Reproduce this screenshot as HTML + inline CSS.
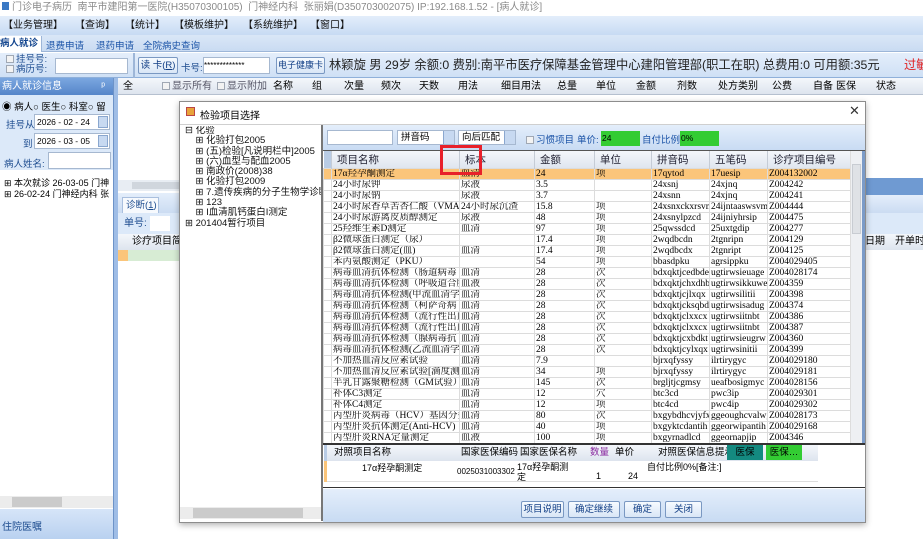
<!DOCTYPE html>
<html><head><meta charset="utf-8">
<style>
*{margin:0;padding:0;box-sizing:border-box}
body{width:923px;height:539px;overflow:hidden;position:relative;background:#fff;font-family:"Liberation Sans","Noto Sans CJK SC",sans-serif;font-size:10px;color:#000}
.a{position:absolute;white-space:nowrap}
.blue{background:linear-gradient(#e3eefb,#c7dbf3)}
table{border-collapse:collapse;table-layout:fixed}
td{border:1px solid #dcdcdc;height:11px;line-height:10px;font-size:9.5px;padding:0 1px;overflow:hidden;white-space:nowrap;font-family:"Liberation Serif","Noto Serif CJK SC",serif}
tr.sel td{background:#fbc57a}
th{font-weight:normal;text-align:left;padding-left:5px;font-size:10.5px;background:linear-gradient(#f4f7fb,#dfe6ef);border-right:1px solid #c5ccd6;height:17px;color:#223;white-space:nowrap;overflow:hidden}
.btn{position:absolute;border:1px solid #7a98c2;background:linear-gradient(#f7fbff,#d9e6f6);color:#123f86;text-align:center;border-radius:2px;font-size:9.5px;line-height:15px;white-space:nowrap;overflow:hidden}
.cb{display:inline-block;width:8px;height:8px;border:1px solid #a0a8b4;background:#f3f3f3;vertical-align:-1px;margin-right:2px}
</style></head><body>

<div class="a" style="left:0;top:0;width:923px;height:16px;background:#fff;color:#8a8a8a;font-size:10px;line-height:16px;padding-left:2px"><span style="display:inline-block;width:7px;height:8px;background:#3b79c4;margin-right:3px"></span>门诊电子病历 &nbsp;南平市建阳第一医院(H35070300105) &nbsp;门神经内科 &nbsp;张丽娟(D350703002075) IP:192.168.1.52 - [病人就诊]</div>
<div class="a blue" style="left:0;top:16px;width:923px;height:19px;font-size:10px;line-height:19px;color:#111">
<span class="a" style="left:3px">【业务管理】</span><span class="a" style="left:75px">【查询】</span><span class="a" style="left:125px">【统计】</span><span class="a" style="left:174px">【模板维护】</span><span class="a" style="left:243px">【系统维护】</span><span class="a" style="left:310px">【窗口】</span></div>
<div class="a" style="left:0;top:35px;width:923px;height:17px;background:linear-gradient(#dae7f7,#c9dbf2);border-bottom:1px solid #9db6d8"></div>
<div class="a" style="left:0;top:36px;width:42px;height:16px;background:#fff;font-weight:bold;color:#14468f;font-size:9.5px;line-height:16px;border-right:1px solid #9db6d8;overflow:hidden">病人就诊</div>
<div class="a" style="left:46px;top:38px;color:#1d55a8;font-size:9.5px">退费申请</div>
<div class="a" style="left:96px;top:38px;color:#1d55a8;font-size:9.5px">退药申请</div>
<div class="a" style="left:143px;top:38px;color:#1d55a8;font-size:9.5px">全院病史查询</div>
<div class="a" style="left:0;top:53px;width:923px;height:25px;background:linear-gradient(#e4eefb,#cfe0f5);border-bottom:1px solid #8fb0da"></div>
<div class="a" style="left:6px;top:55px;font-size:9.5px;line-height:10px;color:#1d4c8f"><span class="cb"></span>挂号号:<br><span class="cb"></span>病历号:</div>
<div class="a" style="left:55px;top:58px;width:73px;height:16px;background:#fff;border:1px solid #a6b8d0"></div>
<div class="a" style="left:133px;top:53px;width:2px;height:25px;background:#9db6d8"></div>
<div class="btn" style="left:138px;top:57px;width:40px;height:17px">读 卡(<u>R</u>)</div>
<div class="a" style="left:181px;top:60px;color:#1d4c8f;font-size:9.5px">卡号:</div>
<div class="a" style="left:203px;top:57px;width:67px;height:17px;background:#fff;border:1px solid #a6b8d0;font-size:8px;line-height:15px;overflow:hidden">*************</div>
<div class="btn" style="left:276px;top:57px;width:49px;height:17px;font-size:9px">电子健康卡</div>
<div class="a" style="left:329px;top:57px;font-size:12.3px;line-height:16px;color:#222">林颖旋 男 29岁 余额:0 费别:南平市医疗保障基金管理中心建阳管理部(职工在职) 总费用:0 可用额:35元</div>
<div class="a" style="left:904px;top:57px;font-size:12.3px;line-height:16px;color:#e02020">过敏</div>
<!-- left panel -->
<div class="a" style="left:0;top:78px;width:113px;height:17px;background:linear-gradient(#7ba7e0,#5585c9);color:#fff;font-size:10px;line-height:17px;padding-left:2px">病人就诊信息<span style="position:absolute;right:8px">ᵖ</span></div>
<div class="a" style="left:0;top:95px;width:113px;height:75px;background:#dce9f9"></div>
<div class="a" style="left:2px;top:99px;font-size:9.5px">◉ 病人○ 医生○ 科室○ 留</div>
<div class="a" style="left:6px;top:117px;font-size:9.5px;color:#1d4c8f">挂号从</div>
<div class="a" style="left:34px;top:114px;width:76px;height:16px;background:#fff;border:1px solid #a6b8d0;font-size:8.5px;line-height:14px;padding-left:2px">2026 - 02 - 24<span style="position:absolute;right:1px;top:1px;width:10px;height:12px;background:#c7d9f1;border:1px solid #8aa7cf"></span></div>
<div class="a" style="left:23px;top:136px;font-size:9.5px;color:#1d4c8f">到</div>
<div class="a" style="left:34px;top:133px;width:76px;height:16px;background:#fff;border:1px solid #a6b8d0;font-size:8.5px;line-height:14px;padding-left:2px">2026 - 03 - 05<span style="position:absolute;right:1px;top:1px;width:10px;height:12px;background:#c7d9f1;border:1px solid #8aa7cf"></span></div>
<div class="a" style="left:4px;top:156px;font-size:9.5px;color:#1d4c8f">病人姓名:</div>
<div class="a" style="left:48px;top:152px;width:63px;height:17px;background:#fff;border:1px solid #a6b8d0"></div>
<div class="a" style="left:4px;top:178px;width:109px;overflow:hidden;font-size:9px;line-height:11px">⊞ 本次就诊 26-03-05 门神<br>⊞ 26-02-24 门神经内科 张</div>
<div class="a" style="left:0;top:496px;width:113px;height:12px;background:#ececec"><div style="position:absolute;left:12px;top:1px;width:50px;height:10px;background:#cbcbcb"></div></div>
<div class="a" style="left:0;top:509px;width:113px;height:30px;background:linear-gradient(#d6e5f8,#b9d1f0);color:#1d4c8f;font-size:10px;line-height:38px;padding-left:2px">住院医嘱</div>
<div class="a" style="left:113px;top:78px;width:5px;height:461px;background:#9fbde6;border-left:1px solid #6d93c8"></div>
<!-- main grid header -->
<div class="a" style="left:118px;top:78px;width:805px;height:17px;background:linear-gradient(#f4f7fb,#dde4ee);border-bottom:1px solid #b5c0cf;font-size:10px;line-height:17px">
<span class="a" style="left:5px">全</span><span class="a" style="left:44px;color:#556"><span class="cb"></span>显示所有</span><span class="a" style="left:99px;color:#556"><span class="cb"></span>显示附加</span><span class="a" style="left:155px">名称</span><span class="a" style="left:194px">组</span><span class="a" style="left:226px">次量</span><span class="a" style="left:263px">频次</span><span class="a" style="left:301px">天数</span><span class="a" style="left:340px">用法</span><span class="a" style="left:383px">细目用法</span><span class="a" style="left:439px">总量</span><span class="a" style="left:478px">单位</span><span class="a" style="left:518px">金额</span><span class="a" style="left:559px">剂数</span><span class="a" style="left:600px">处方类别</span><span class="a" style="left:654px">公费</span><span class="a" style="left:695px">自备</span><span class="a" style="left:718px">医保</span><span class="a" style="left:758px">状态</span></div>
<!-- behind dialog left -->
<div class="a" style="left:118px;top:180px;width:62px;height:11px;background:#e8edf3"><div style="position:absolute;left:14px;top:2px;width:48px;height:7px;background:#d0d6dd"></div></div>
<div class="a" style="left:118px;top:193px;width:62px;height:20px;background:linear-gradient(#e4eefb,#cbdcf2)"></div>
<div class="a" style="left:122px;top:197px;width:37px;height:16px;background:#f6f9fd;border:1px solid #a9bfde;border-bottom:none;color:#1d4c8f;font-size:9.5px;line-height:15px;padding-left:3px">诊断(<u>1</u>)</div>
<div class="a" style="left:118px;top:213px;width:62px;height:21px;background:#dce9f9;color:#1d4c8f;font-size:10px;line-height:21px;padding-left:6px">单号:<span style="display:inline-block;width:20px;height:15px;background:#fff;vertical-align:middle;margin-left:3px"></span></div>
<div class="a" style="left:118px;top:234px;width:62px;height:16px;background:linear-gradient(#f4f7fb,#dde4ee);font-size:10px;line-height:16px;padding-left:14px;overflow:hidden">诊疗项目简</div>
<div class="a" style="left:118px;top:250px;width:62px;height:11px;background:#d7ecd4"><div style="width:10px;height:11px;background:#fbc57a"></div></div>
<!-- behind dialog right -->
<div class="a" style="left:865px;top:178px;width:58px;height:17px;background:#6f9ad2"></div>
<div class="a" style="left:865px;top:195px;width:58px;height:18px;background:linear-gradient(#e4eefb,#cbdcf2)"></div>
<div class="a" style="left:865px;top:213px;width:58px;height:21px;background:#dce9f9"></div>
<div class="a" style="left:865px;top:234px;width:58px;height:16px;background:linear-gradient(#f4f7fb,#dde4ee);font-size:10px;line-height:16px"><span style="position:absolute;left:0">日期</span><span style="position:absolute;left:30px">开单时</span></div>

<!-- dialog -->
<div class="a" style="left:179px;top:101px;width:687px;height:422px;background:#fff;border:1px solid #8d8d8d;box-shadow:0 2px 6px rgba(0,0,0,.3)"></div>
<div class="a" style="left:186px;top:107px;width:9px;height:9px;background:#e8a33a;border:1px solid #b44"></div>
<div class="a" style="left:200px;top:107px;font-size:10px">检验项目选择</div>
<div class="a" style="left:849px;top:103px;font-size:13px;color:#333">✕</div>
<div class="a" style="left:180px;top:124px;width:685px;height:1px;background:#cfcfcf"></div>
<!-- tree -->
<div class="a" style="left:185px;top:126px;width:136px;overflow:hidden;font-size:9.5px;line-height:10.3px;color:#111">⊟ 化验<br>&nbsp;&nbsp;&nbsp;&nbsp;⊞ 化验打包2005<br>&nbsp;&nbsp;&nbsp;&nbsp;⊞ (五)检验[凡说明栏中]2005<br>&nbsp;&nbsp;&nbsp;&nbsp;⊞ (六)血型与配血2005<br>&nbsp;&nbsp;&nbsp;&nbsp;⊞ 南政价(2008)38<br>&nbsp;&nbsp;&nbsp;&nbsp;⊞ 化验打包2009<br>&nbsp;&nbsp;&nbsp;&nbsp;⊞ 7.遗传疾病的分子生物学诊断<br>&nbsp;&nbsp;&nbsp;&nbsp;⊞ 123<br>&nbsp;&nbsp;&nbsp;&nbsp;⊞ I血清肌钙蛋白I测定<br>⊞ 201404暂行项目</div>
<div class="a" style="left:180px;top:507px;width:141px;height:12px;background:#ececec"><div style="position:absolute;left:13px;top:1px;width:110px;height:10px;background:#cbcbcb"></div></div>
<div class="a" style="left:321px;top:125px;width:2px;height:396px;background:#777"></div>
<!-- right toolbar -->
<div class="a" style="left:323px;top:125px;width:542px;height:25px;background:linear-gradient(#e4eefb,#c8dbf3)"></div>
<div class="a" style="left:327px;top:130px;width:66px;height:15px;background:#fff;border:1px solid #a6b8d0"></div>
<div class="a" style="left:397px;top:130px;width:58px;height:15px;background:#fff;border:1px solid #a6b8d0;font-size:9.5px;line-height:13px;padding-left:3px">拼音码<span style="position:absolute;right:0;top:0;width:11px;height:13px;background:#c7d9f1;border-left:1px solid #8aa7cf"></span></div>
<div class="a" style="left:458px;top:130px;width:58px;height:15px;background:#fff;border:1px solid #a6b8d0;font-size:9.5px;line-height:13px;padding-left:3px">向后匹配<span style="position:absolute;right:0;top:0;width:11px;height:13px;background:#c7d9f1;border-left:1px solid #8aa7cf"></span></div>
<div class="a" style="left:526px;top:132px;font-size:9.5px;color:#1d55a8"><span class="cb"></span>习惯项目</div>
<div class="a" style="left:577px;top:132px;font-size:9.5px;color:#1d55a8">单价:</div>
<div class="a" style="left:601px;top:131px;width:39px;height:15px;background:#33cc33;font-size:8.5px;line-height:14px;padding-left:1px">24</div>
<div class="a" style="left:642px;top:132px;font-size:9.5px;color:#1d55a8">自付比例:</div>
<div class="a" style="left:680px;top:131px;width:39px;height:15px;background:#33cc33;font-size:8.5px;line-height:14px;padding-left:1px">0%</div>
<!-- main table -->
<div class="a" style="left:323px;top:150px;width:542px;height:293px;background:#fff;border-top:1px solid #555;overflow:hidden">
<table style="width:527px"><colgroup><col style="width:8px"><col style="width:128px"><col style="width:75px"><col style="width:60px"><col style="width:57px"><col style="width:58px"><col style="width:58px"><col style="width:83px"></colgroup>
<tr><th style="padding:0;background:#b9cce5"></th><th>项目名称</th><th>标本</th><th>金额</th><th>单位</th><th>拼音码</th><th>五笔码</th><th>诊疗项目编号</th></tr>
<tr class="sel"><td></td><td>17α羟孕酮测定</td><td>血清</td><td>24</td><td>项</td><td>17qytod</td><td>17uesip</td><td>Z004132002</td></tr>
<tr><td></td><td>24小时尿钾</td><td>尿液</td><td>3.5</td><td></td><td>24xsnj</td><td>24xjnq</td><td>Z004242</td></tr>
<tr><td></td><td>24小时尿钠</td><td>尿液</td><td>3.7</td><td></td><td>24xsnn</td><td>24xjnq</td><td>Z004241</td></tr>
<tr><td></td><td>24小时尿香草苦杏仁酸（VMA）测</td><td>24小时尿沉渣</td><td>15.8</td><td>项</td><td>24xsnxckxrsvm</td><td>24ijntaaswsvm</td><td>Z004444</td></tr>
<tr><td></td><td>24小时尿游离皮质醇测定</td><td>尿液</td><td>48</td><td>项</td><td>24xsnylpzcd</td><td>24ijniyhrsip</td><td>Z004475</td></tr>
<tr><td></td><td>25羟维生素D测定</td><td>血清</td><td>97</td><td>项</td><td>25qwssdcd</td><td>25uxtgdip</td><td>Z004277</td></tr>
<tr><td></td><td>β2微球蛋白测定（尿）</td><td></td><td>17.4</td><td>项</td><td>2wqdbcdn</td><td>2tgnripn</td><td>Z004129</td></tr>
<tr><td></td><td>β2微球蛋白测定(血)</td><td>血清</td><td>17.4</td><td>项</td><td>2wqdbcdx</td><td>2tgnript</td><td>Z004125</td></tr>
<tr><td></td><td>苯丙氨酸测定（PKU）</td><td></td><td>54</td><td>项</td><td>bbasdpku</td><td>agrsippku</td><td>Z004029405</td></tr>
<tr><td></td><td>病毒血清抗体检测（肠道病毒</td><td>血清</td><td>28</td><td>次</td><td>bdxqktjcedbde</td><td>ugtirwsieuage</td><td>Z004028174</td></tr>
<tr><td></td><td>病毒血清抗体检测（呼吸道合胞</td><td>血液</td><td>28</td><td>次</td><td>bdxqktjchxdhb</td><td>ugtirwsikkuwe</td><td>Z004359</td></tr>
<tr><td></td><td>病毒血清抗体检测(甲流血清学抗</td><td>血清</td><td>28</td><td>次</td><td>bdxqktjcjlxqx</td><td>ugtirwsilitii</td><td>Z004398</td></tr>
<tr><td></td><td>病毒血清抗体检测（柯萨奇病</td><td>血清</td><td>28</td><td>次</td><td>bdxqktjcksqbd</td><td>ugtirwsisadug</td><td>Z004374</td></tr>
<tr><td></td><td>病毒血清抗体检测（流行性出血</td><td>血清</td><td>28</td><td>次</td><td>bdxqktjclxxcx</td><td>ugtirwsiitnbt</td><td>Z004386</td></tr>
<tr><td></td><td>病毒血清抗体检测（流行性出血</td><td>血清</td><td>28</td><td>次</td><td>bdxqktjclxxcx</td><td>ugtirwsiitnbt</td><td>Z004387</td></tr>
<tr><td></td><td>病毒血清抗体检测（腺病毒抗</td><td>血清</td><td>28</td><td>次</td><td>bdxqktjcxbdkt</td><td>ugtirwsieugrw</td><td>Z004360</td></tr>
<tr><td></td><td>病毒血清抗体检测(乙流血清学抗</td><td>血清</td><td>28</td><td>次</td><td>bdxqktjcylxqx</td><td>ugtirwsinitii</td><td>Z004399</td></tr>
<tr><td></td><td>不加热血清反应素试验</td><td>血清</td><td>7.9</td><td></td><td>bjrxqfyssy</td><td>ilrtirygyc</td><td>Z004029180</td></tr>
<tr><td></td><td>不加热血清反应素试验[滴度测</td><td>血清</td><td>34</td><td>项</td><td>bjrxqfyssy</td><td>ilrtirygyc</td><td>Z004029181</td></tr>
<tr><td></td><td>半乳甘露聚糖检测（GM试验）</td><td>血清</td><td>145</td><td>次</td><td>brgljtjcgmsy</td><td>ueafbosigmyc</td><td>Z004028156</td></tr>
<tr><td></td><td>补体C3测定</td><td>血清</td><td>12</td><td>穴</td><td>btc3cd</td><td>pwc3ip</td><td>Z004029301</td></tr>
<tr><td></td><td>补体C4测定</td><td>血清</td><td>12</td><td>项</td><td>btc4cd</td><td>pwc4ip</td><td>Z004029302</td></tr>
<tr><td></td><td>丙型肝炎病毒（HCV）基因分型</td><td>血清</td><td>80</td><td>次</td><td>bxgybdhcvjyfx</td><td>ggeoughcvalwg</td><td>Z004028173</td></tr>
<tr><td></td><td>丙型肝炎抗体测定(Anti-HCV)</td><td>血清</td><td>40</td><td>项</td><td>bxgyktcdantih</td><td>ggeorwipantih</td><td>Z004029168</td></tr>
<tr><td></td><td>丙型肝炎RNA定量测定</td><td>血液</td><td>100</td><td>项</td><td>bxgyrnadlcd</td><td>ggeornapjip</td><td>Z004346</td></tr>
</table>
<div style="position:absolute;left:527px;top:0;width:12px;height:293px;background:#eef0f3;border-left:1px solid #ddd"><div style="position:absolute;left:1px;top:13px;width:9px;height:70px;background:#dfe2e6;border:1px solid #c8ccd2"></div></div>
<div style="position:absolute;left:539px;top:0;width:3px;height:293px;background:#7b9bc8"></div>
</div>
<div class="a" style="left:440px;top:145px;width:42px;height:30px;border:3px solid #e8202a"></div>
<!-- lower grid -->
<div class="a" style="left:323px;top:443px;width:542px;height:45px;background:#fff;border-top:2px solid #333;border-bottom:1px solid #333"></div>
<div class="a" style="left:324px;top:445px;width:494px;height:16px;background:linear-gradient(#f4f7fb,#dde4ee);font-size:9.5px;line-height:16px">
<span class="a" style="left:0;width:3px;height:16px;background:#b9cce5"></span>
<span class="a" style="left:10px">对照项目名称</span><span class="a" style="left:137px">国家医保编码</span><span class="a" style="left:196px">国家医保名称</span><span class="a" style="left:266px;color:#8a2aa0">数量</span><span class="a" style="left:291px">单价</span><span class="a" style="left:334px">对照医保信息提示</span>
<span class="a" style="left:403px;top:0;width:36px;height:15px;background:#148a80;text-align:center">医保</span><span class="a" style="left:442px;top:0;width:36px;height:15px;background:#33cc33;text-align:center">医保…</span></div>
<div class="a" style="left:324px;top:461px;width:3px;height:21px;background:#fbc57a"></div>
<div class="a" style="left:327px;top:461px;width:491px;height:21px;border-bottom:1px solid #ddd;font-size:9px;line-height:10px">
<span class="a" style="left:35px;top:2px">17α羟孕酮测定</span><span class="a" style="left:130px;top:6px;width:58px;overflow:hidden;font-size:8px">00250310033020</span><span class="a" style="left:190px;top:1px;white-space:normal;width:52px">17α羟孕酮测定</span><span class="a" style="left:269px;top:10px">1</span><span class="a" style="left:301px;top:10px">24</span><span class="a" style="left:320px;top:1px">自付比例0%[备注:]</span></div>
<!-- button bar -->
<div class="a" style="left:323px;top:489px;width:542px;height:33px;background:linear-gradient(#e4eefb,#c8dbf3)"></div>
<div class="btn" style="left:521px;top:501px;width:43px;height:17px">项目说明</div>
<div class="btn" style="left:568px;top:501px;width:52px;height:17px">确定继续</div>
<div class="btn" style="left:624px;top:501px;width:37px;height:17px">确定</div>
<div class="btn" style="left:665px;top:501px;width:37px;height:17px">关闭</div>
</body></html>
